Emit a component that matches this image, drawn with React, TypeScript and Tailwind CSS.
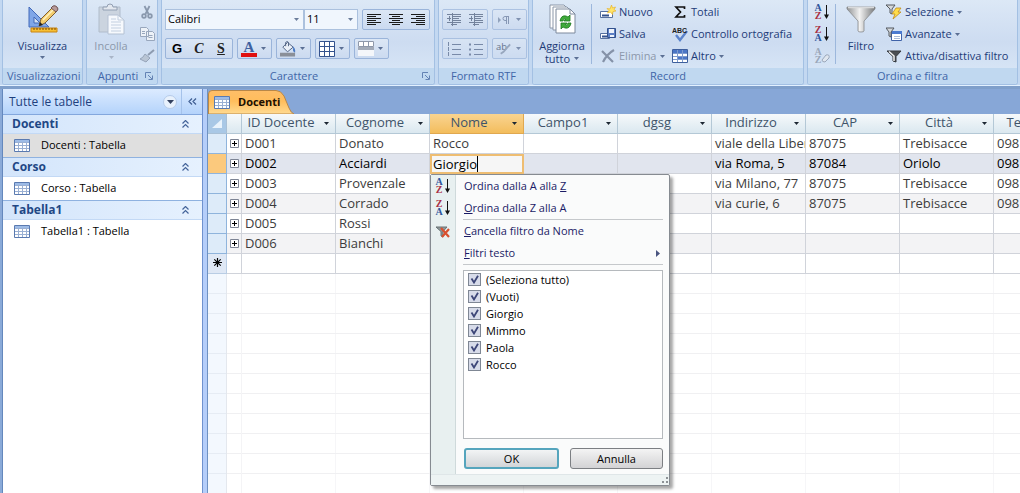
import { useState, type ReactNode } from 'react'

interface Row {
  id: string
  surname: string
  name?: string
  address?: string
  zip?: string
  city?: string
  phone?: string
}

const ROWS: Row[] = [
  { id: 'D001', surname: 'Donato', name: 'Rocco', address: 'viale della Liber', zip: '87075', city: 'Trebisacce', phone: '0981' },
  { id: 'D002', surname: 'Acciardi', name: 'Giorgio', address: 'via Roma, 5', zip: '87084', city: 'Oriolo', phone: '0981' },
  { id: 'D003', surname: 'Provenzale', address: 'via Milano, 77', zip: '87075', city: 'Trebisacce', phone: '0981' },
  { id: 'D004', surname: 'Corrado', address: 'via curie, 6', zip: '87075', city: 'Trebisacce', phone: '0981' },
  { id: 'D005', surname: 'Rossi' },
  { id: 'D006', surname: 'Bianchi' },
]

const COLUMNS = ['ID Docente', 'Cognome', 'Nome', 'Campo1', 'dgsg', 'Indirizzo', 'CAP', 'Città', 'Telefono']
const FILTER_VALUES = ['(Seleziona tutto)', '(Vuoti)', 'Giorgio', 'Mimmo', 'Paola', 'Rocco']
const ACTIVE_ROW = 'D002'

export default function App() {
  return (
    <div className="flex h-screen w-full flex-col overflow-hidden bg-[#87a7d7] font-['Open_Sans',sans-serif] text-[11px] text-[#1e3c78]">
      <Ribbon />
      <div className="flex min-h-0 flex-1">
        <NavPane />
        <main className="flex min-w-0 flex-1 flex-col">
          <DocumentTab />
          <DataSheet />
        </main>
      </div>
    </div>
  )
}

// ── Ribbon ───────────────────────────────────────────────────────────────────

function Ribbon() {
  return (
    <header className="shrink-0 border-b-3 border-[#7f9fca] bg-[#c3d8f1]">
      <div className="flex gap-[3px] border-b border-[#e3f1ff] px-[2px]">
        <Group title="Visualizzazioni" width="w-[81px]">
          <BigButton icon={<DesignIcon />} label="Visualizza" arrow />
        </Group>

        <Group title="Appunti" width="w-[72px]" launcher>
          <div className="flex">
            <BigButton icon={<PasteIcon />} label="Incolla" arrow disabled />
            <div className="flex flex-col">
              <IconButton label="Taglia"><ScissorsIcon /></IconButton>
              <IconButton label="Copia"><CopyIcon /></IconButton>
              <IconButton label="Copia formato"><BrushIcon /></IconButton>
            </div>
          </div>
        </Group>

        <Group title="Carattere" width="w-[274px]" launcher>
          <div className="flex w-full flex-col gap-2 px-[3px] pt-[9px]">
            <div className="flex gap-1">
              <div className="flex">
                <Picker label="Tipo di carattere" value="Calibri" width="w-[139px]" />
                <Picker label="Dimensione carattere" value="11" width="w-[54px]" />
              </div>
              <Cluster>
                <ToolButton label="Allinea a sinistra"><AlignIcon align="left" /></ToolButton>
                <ToolButton label="Centra"><AlignIcon align="center" /></ToolButton>
                <ToolButton label="Allinea a destra"><AlignIcon align="right" /></ToolButton>
              </Cluster>
            </div>
            <div className="flex gap-1">
              <Cluster>
                <ToolButton label="Grassetto"><b className="font-['Liberation_Sans',sans-serif] text-[13px] font-black text-black">G</b></ToolButton>
                <ToolButton label="Corsivo"><i className="font-['Liberation_Serif',serif] text-[14px] font-bold text-[#222]">C</i></ToolButton>
                <ToolButton label="Sottolineato"><b className="font-['Liberation_Serif',serif] text-[14px] text-[#222] underline">S</b></ToolButton>
              </Cluster>
              <Cluster>
                <ToolButton label="Colore carattere" arrow><FontColorIcon /></ToolButton>
              </Cluster>
              <Cluster>
                <ToolButton label="Colore riempimento" arrow><FillIcon /></ToolButton>
              </Cluster>
              <Cluster>
                <ToolButton label="Griglia" arrow><BordersIcon /></ToolButton>
              </Cluster>
              <Cluster>
                <ToolButton label="Colore alternato" arrow><StripesIcon /></ToolButton>
              </Cluster>
            </div>
          </div>
        </Group>

        <Group title="Formato RTF" width="w-[91px]">
          <div className="flex w-full flex-col gap-2 px-[3px] pt-[9px] opacity-70">
            <div className="flex gap-1">
              <Cluster>
                <ToolButton label="Riduci rientro"><IndentIcon /></ToolButton>
                <ToolButton label="Aumenta rientro"><IndentIcon /></ToolButton>
              </Cluster>
              <Cluster>
                <ToolButton label="Direzione testo" arrow><ParagraphIcon /></ToolButton>
              </Cluster>
            </div>
            <div className="flex gap-1">
              <Cluster>
                <ToolButton label="Elenco numerato"><ListIcon /></ToolButton>
                <ToolButton label="Elenco puntato"><ListIcon dots /></ToolButton>
              </Cluster>
              <Cluster>
                <ToolButton label="Evidenziatore" arrow><HighlightIcon /></ToolButton>
              </Cluster>
            </div>
          </div>
        </Group>

        <Group title="Record" width="w-[272px]">
          <div className="flex w-full gap-1 pl-1">
            <BigButton icon={<RefreshIcon />} label="Aggiorna" second="tutto" />
            <div className="my-1 mr-1 w-px bg-[#9cb7dc]" />
            <div className="flex w-[68px] flex-col">
              <SmallButton icon={<NewRecordIcon />} label="Nuovo" />
              <SmallButton icon={<SaveRecordIcon />} label="Salva" />
              <SmallButton icon={<DeleteIcon />} label="Elimina" arrow disabled />
            </div>
            <div className="flex flex-col">
              <SmallButton icon={<SigmaIcon />} label="Totali" />
              <SmallButton icon={<SpellIcon />} label="Controllo ortografia" />
              <SmallButton icon={<MoreIcon />} label="Altro" arrow />
            </div>
          </div>
        </Group>

        <Group title="Ordina e filtra" width="w-[211px]">
          <div className="flex w-full pl-[3px]">
            <div className="flex flex-col">
              <IconButton label="Crescente"><SortIcon top="A" bottom="Z" /></IconButton>
              <IconButton label="Decrescente"><SortIcon top="Z" bottom="A" /></IconButton>
              <IconButton label="Cancella ordinamento"><ClearSortIcon /></IconButton>
            </div>
            <div className="my-1 ml-[2px] w-px bg-[#9cb7dc]" />
            <BigButton icon={<FunnelIcon />} label="Filtro" />
            <div className="flex flex-col">
              <SmallButton icon={<SelectionIcon />} label="Selezione" arrow />
              <SmallButton icon={<AdvancedIcon />} label="Avanzate" arrow />
              <SmallButton icon={<ToggleFilterIcon />} label="Attiva/disattiva filtro" />
            </div>
          </div>
        </Group>
      </div>
    </header>
  )
}

function Group({ title, width, launcher, children }: { title: string; width: string; launcher?: boolean; children: ReactNode }) {
  return (
    <section className={`${width} flex shrink-0 flex-col overflow-hidden rounded-b-[3px] border-x border-b border-[#a3c0e3] bg-linear-to-b from-[#dce8f6] via-[#cddcf1] to-[#dbe9f8]`}>
      <div className="flex h-[68px] justify-center">{children}</div>
      <div className="flex h-[16px] items-center bg-[#c0d8f0] px-1 text-[#4166a8]">
        <h2 className="flex-1 text-center whitespace-nowrap">{title}</h2>
        {launcher && (
          <button aria-label={`Opzioni ${title}`}>
            <svg width="8" height="8" viewBox="0 0 8 8" fill="none" stroke="#6483b4">
              <path d="M.5 6V.5H6M3 3l4 4M7.5 3.500v4h-4" />
            </svg>
          </button>
        )}
      </div>
    </section>
  )
}

function Arrow({ color = 'fill-[#5b6f94]' }: { color?: string }) {
  return (
    <svg width="5" height="3" viewBox="0 0 5 3" className={`shrink-0 ${color}`}>
      <path d="M0 0h5L2.500 3z" />
    </svg>
  )
}

function BigButton({ icon, label, second, arrow, disabled }: { icon: ReactNode; label: string; second?: string; arrow?: boolean; disabled?: boolean }) {
  return (
    <button className={`flex min-w-[50px] flex-col items-center pt-[3px] leading-[13px] ${disabled ? 'text-[#8c98ab]' : ''}`}>
      {icon}
      <span className="pt-1">{label}</span>
      {second && <span className="flex items-center gap-1">{second}<Arrow /></span>}
      {arrow && <span className="pt-1"><Arrow color={disabled ? 'fill-[#a9b5c8]' : undefined} /></span>}
    </button>
  )
}

function SmallButton({ icon, label, arrow, disabled }: { icon: ReactNode; label: string; arrow?: boolean; disabled?: boolean }) {
  return (
    <button className={`flex h-[22px] items-center gap-[3px] pt-[2px] whitespace-nowrap ${disabled ? 'text-[#8c98ab]' : ''}`}>
      {icon}
      <span>{label}</span>
      {arrow && <Arrow />}
    </button>
  )
}

function IconButton({ label, children }: { label: string; children: ReactNode }) {
  return (
    <button aria-label={label} className="flex h-[22px] w-[22px] items-center justify-center pt-[2px]">
      {children}
    </button>
  )
}

function Cluster({ children }: { children: ReactNode }) {
  return <div className="flex h-[21px] rounded-[2px] border border-[#9ab4da] bg-linear-to-b from-[#dce7f5] to-[#cbdaf0]">{children}</div>
}

function ToolButton({ label, arrow, children }: { label: string; arrow?: boolean; children: ReactNode }) {
  return (
    <button aria-label={label} className="flex items-center justify-center gap-1 px-[3px] leading-none">
      <span className="flex w-4 justify-center">{children}</span>
      {arrow && <span className="pr-[2px]"><Arrow /></span>}
    </button>
  )
}

function Picker({ label, value, width }: { label: string; value: string; width: string }) {
  return (
    <div className={`${width} flex h-[21px] items-center border border-[#abc1de] bg-[#f0f6fd] pr-1`}>
      <select aria-label={label} defaultValue={value} className="min-w-0 flex-1 appearance-none bg-transparent pl-[2px] text-black outline-none">
        <option>{value}</option>
      </select>
      <Arrow color="fill-[#6b7d9b]" />
    </div>
  )
}

// ── Navigation pane ──────────────────────────────────────────────────────────

function NavPane() {
  return (
    <aside className="flex w-[208px] shrink-0 border-r border-[#6f92c2]">
      <div className="w-[3px] border-r border-[#6488bd] bg-[#8aaad8]" />
      <div className="flex-1 bg-white">
        <div className="flex h-[26px] items-center border-b border-[#83a7dd] bg-linear-to-b from-[#dcebff] to-[#b4d3fb] pl-[6px]">
          <h2 className="flex-1 text-xs text-[#1e3f7e]">Tutte le tabelle</h2>
          <button aria-label="Categorie" className="mr-1 flex size-[14px] items-center justify-center rounded-full border border-[#b6cbe9] bg-[#e8f1fc]">
            <svg width="7" height="4" viewBox="0 0 7 4"><path d="M0 0h7L3.500 4z" fill="#33415f" /></svg>
          </button>
          <button aria-label="Riduci riquadro" className="flex h-full w-[21px] items-center justify-center border-l border-[#a5c2ea]">
            <svg width="9" height="7" viewBox="0 0 9 7" fill="none" stroke="#3f5e92" strokeWidth="1.200"><path d="M4 .5l-3 3 3 3M8 .5l-3 3 3 3" /></svg>
          </button>
        </div>
        <NavGroup title="Docenti" selected />
        <NavGroup title="Corso" />
        <NavGroup title="Tabella1" last />
      </div>
      <div className="w-[5px] border-l border-[#6f92cf] bg-[#b5cefa]" />
    </aside>
  )
}

function NavGroup({ title, selected, last }: { title: string; selected?: boolean; last?: boolean }) {
  return (
    <section>
      <button className="flex h-[19px] w-full items-center justify-between border-b border-[#c3d9f5] bg-linear-to-r from-[#d3e5fb] to-[#e6f1fe] pr-[13px] pl-[9px] text-xs font-bold text-[#1f4785]">
        {title}
        <svg width="7" height="8" viewBox="0 0 7 8" fill="none" stroke="#44649a" strokeWidth="1.200"><path d="M.5 3.500l3-3 3 3M.5 7.500l3-3 3 3" /></svg>
      </button>
      <a href="#" className={`flex h-6 items-center gap-[11px] pb-px pl-[11px] text-black ${selected ? 'bg-[#dfdfdf]' : ''} ${last ? '' : 'border-b border-[#8fb2e0]'}`}>
        <TableIcon />
        {title} : Tabella
      </a>
    </section>
  )
}

// ── Datasheet ────────────────────────────────────────────────────────────────

function DocumentTab() {
  return (
    <div className="flex h-[25px] shrink-0 items-end">
      <button className="relative flex h-6 w-[86px] items-center gap-2 pl-[6px] font-bold text-[#201000]">
        <svg className="absolute inset-0" width="86" height="24" viewBox="0 0 86 24">
          <defs>
            <linearGradient id="tab" x2="0" y2="1">
              <stop offset="0" stopColor="#ffbe68" />
              <stop offset=".45" stopColor="#ffbd5c" />
              <stop offset="1" stopColor="#ffdb92" />
            </linearGradient>
          </defs>
          <path d="M.5 24V4Q.5.500 4 .5H68Q73 .5 76 6L81 18Q83 23 86 24z" fill="url(#tab)" stroke="#b88748" />
        </svg>
        <span className="relative"><TableIcon /></span>
        <span className="relative">Docenti</span>
      </button>
    </div>
  )
}

function DataSheet() {
  const [name, setName] = useState('Giorgio')

  return (
    <div className="flex min-h-0 flex-1 flex-col overflow-hidden bg-white text-[13px] text-[#3c3c3c]">
      <table className="relative z-10 w-[880px] table-fixed border-separate border-spacing-0 leading-[19px]">
        <colgroup>
          <col className="w-[19px]" />
          <col className="w-[15px]" />
          {COLUMNS.map(c => <col key={c} className="w-[94px]" />)}
        </colgroup>
        <thead>
          <tr className="h-5 bg-linear-to-b from-[#f6f9fb] to-[#d9e7ef]">
            <th className="border-r border-b border-[#a9c0d6] bg-[#a9c8e6] p-0">
              <svg width="18" height="19" viewBox="0 0 18 19"><path d="M14 5v9H4z" fill="#e9f3fc" /></svg>
            </th>
            <th className="border-r border-b border-[#b4c8d6] p-0" />
            {COLUMNS.map(c => (
              <th key={c} className={`border-r border-b p-0 font-normal ${c === 'Nome' ? 'border-[#e0a850] bg-linear-to-b from-[#f9d490] to-[#f3bd5c]' : 'border-[#b4c8d6]'}`}>
                <button className="flex h-[19px] w-full items-center pr-[6px] pl-1 leading-[17px] text-[#40546a]">
                  <span className="flex-1 self-start pr-2 whitespace-nowrap">{c}</span>
                  <Arrow color="fill-[#1c2733]" />
                </button>
              </th>
            ))}
          </tr>
        </thead>
        <tbody>
          {ROWS.map((r, i) => {
            const active = r.id === ACTIVE_ROW
            return (
              <tr key={r.id} className={`h-5 ${active ? 'bg-[#e1e5ee] text-black' : i % 2 ? 'bg-[#f3f3f5]' : 'bg-white'}`}>
                <td className={`border-r border-b border-[#8fb4dc] p-0 ${active ? 'bg-[#fbc97d]' : 'bg-[#ddebf9]'}`} />
                <td className="border-r border-b border-[#d0d3da] p-0">
                  <button aria-label={`Espandi ${r.id}`} className="mx-auto flex">
                    <svg width="9" height="9" viewBox="0 0 9 9" fill="none"><path d="M.5.5h8v8h-8z" fill="#fff" stroke="#7d8494" /><path d="M2 4.500h5M4.500 2v5" stroke="#000" /></svg>
                  </button>
                </td>
                <Cell>{r.id}</Cell>
                <Cell>{r.surname}</Cell>
                {active ? (
                  <td className="relative bg-[#f6f6f6] p-0">
                    <div className="flex h-5 items-center border-2 border-[#eebd72] pl-px">
                      <input aria-label="Nome" value={name} onChange={e => setName(e.target.value)} className="field-sizing-content h-4 bg-transparent text-black outline-none" />
                      <span className="h-4 w-px bg-black" />
                    </div>
                    <FilterMenu />
                  </td>
                ) : (
                  <Cell>{r.name}</Cell>
                )}
                <Cell />
                <Cell />
                <Cell>{r.address}</Cell>
                <Cell>{r.zip}</Cell>
                <Cell>{r.city}</Cell>
                <Cell>{r.phone}</Cell>
              </tr>
            )
          })}
          <tr className="h-5 bg-white">
            <td className="border-r border-b border-[#b9cde4] bg-[#dfe8f5] p-0">
              <svg width="18" height="19" viewBox="0 0 18 19" stroke="#000" strokeWidth="1.200"><path d="M9.500 4v9M5 8.500h9M6.300 5.300l6.400 6.400M12.700 5.300l-6.400 6.400" /></svg>
            </td>
            <td className="border-r border-b border-[#d0d3da] p-0" />
            {COLUMNS.map(c => <Cell key={c} />)}
          </tr>
        </tbody>
      </table>

      {/* Unused area below the new-record row */}
      <div className="flex flex-1">
        <div className="w-[19px] shrink-0 border-r border-[#e4e8ee] bg-[#f3f8fe] bg-[repeating-linear-gradient(to_bottom,transparent_0_19px,#e6ecf4_19px_20px)]" />
        <div className="w-[15px] shrink-0 border-r border-[#f4f4f6] bg-[repeating-linear-gradient(to_bottom,transparent_0_19px,#f0f0f2_19px_20px)]" />
        <div className="flex-1 bg-[repeating-linear-gradient(to_bottom,transparent_0_19px,#f0f0f2_19px_20px),repeating-linear-gradient(to_right,transparent_0_93px,#f6f6f8_93px_94px)]" />
      </div>
    </div>
  )
}

function Cell({ children }: { children?: ReactNode }) {
  return (
    <td className="overflow-hidden border-r border-b border-[#d0d3da] p-0 pl-[3px] whitespace-nowrap">{children}</td>
  )
}

// ── Column filter menu ───────────────────────────────────────────────────────

function FilterMenu() {
  return (
    <div className="absolute top-5 left-0 z-20 flex w-[240px] flex-col rounded-[2px] border border-[#868b91] bg-[#fafbfb] text-[11px] leading-4 text-[#1b1b66] shadow-[3px_3px_3px_rgba(0,0,0,0.35)]">
      <div className="flex">
        <div className="flex w-[25px] shrink-0 flex-col items-center border-r border-[#cfdadb] bg-[#e8f0f0]">
          <span className="flex h-[22px] items-center"><SortIcon top="A" bottom="Z" /></span>
          <span className="flex h-[22px] items-center"><SortIcon top="Z" bottom="A" /></span>
          <span className="mt-[2px] flex h-[22px] items-center"><ClearFilterIcon /></span>
        </div>
        <div className="flex flex-1 flex-col pr-[6px] pl-[7px]">
          <MenuItem>Ordina dalla A alla <u>Z</u></MenuItem>
          <MenuItem><u>O</u>rdina dalla Z alla A</MenuItem>
          <hr className="border-[#c5c8cb]" />
          <MenuItem><u>C</u>ancella filtro da Nome</MenuItem>
          <MenuItem submenu><u>F</u>iltri testo</MenuItem>
          <hr className="mb-[5px] border-[#c5c8cb]" />
          <div className="h-[169px] border border-[#b5b9bd] bg-white pl-1 text-black">
            {FILTER_VALUES.map(v => (
              <label key={v} className="flex h-[17px] items-center gap-[5px]">
                <span className="grid size-[13px] place-items-center *:col-start-1 *:row-start-1">
                  <input type="checkbox" defaultChecked className="peer size-[13px] appearance-none border border-[#7f8794] bg-[#d7dbe9]" />
                  <svg width="9" height="9" viewBox="0 0 9 9" fill="none" className="pointer-events-none invisible peer-checked:visible"><path d="M1.500 3.500L4 7.500 8 .8" stroke="#3d4678" strokeWidth="1.800" /></svg>
                </span>
                {v}
              </label>
            ))}
          </div>
          <div className="flex gap-[11px] pt-[9px] pb-[5px] pl-px">
            <button className="h-[21px] flex-1 rounded-[3px] border-2 border-[#55a5bd] bg-linear-to-b from-[#f2f4f5] to-[#d2d5d8] leading-none text-black">OK</button>
            <button className="h-[21px] flex-1 rounded-[3px] border border-[#7c7f83] bg-linear-to-b from-[#f4f4f4] to-[#d3d3d5] leading-none text-black">Annulla</button>
          </div>
        </div>
      </div>
      <div className="flex h-[11px] items-end justify-end border-t border-[#dfe6e8] bg-[#edf3f3] p-px">
        <svg width="7" height="7" viewBox="0 0 7 7" fill="#8d9296"><path d="M5 0h2v2H5zM5 4h2v2H5zM1 4h2v2H1z" /></svg>
      </div>
    </div>
  )
}

function MenuItem({ submenu, children }: { submenu?: boolean; children: ReactNode }) {
  return (
    <button className="flex h-[22px] items-center justify-between pr-[3px] pl-px text-left">
      <span>{children}</span>
      {submenu && <svg width="4" height="7" viewBox="0 0 4 7"><path d="M0 0l4 3.500L0 7z" fill="#4a5580" /></svg>}
    </button>
  )
}

// ── Icons ────────────────────────────────────────────────────────────────────

function TableIcon() {
  return (
    <svg width="16" height="13" viewBox="0 0 16 13">
      <path d="M.5.5h15v12H.5z" fill="#fff" stroke="#5a7ab0" />
      <path d="M1 1h14v2H1z" fill="#9dbbe6" />
      <path d="M1 3.500h14M1 6.500h14M1 9.500h14M4.500 3v9M8.500 3v9M12.500 3v9" stroke="#9ab0d3" />
    </svg>
  )
}

function DesignIcon() {
  return (
    <svg width="32" height="32" viewBox="0 0 32 32">
      <path d="M2 4v20h20zM7 14l6 6H7z" fill="#7fa6e8" fillRule="evenodd" stroke="#4268b8" />
      <path d="M4 25h26v4H4z" fill="#f7bf33" stroke="#c98413" />
      <path d="M7 25v2M10 25v2M13 25v2M16 25v2M19 25v2M22 25v2M25 25v2M28 25v2" stroke="#7c4a00" />
      <path d="M12 23l2-7L26 4l4 4-12 12z" fill="#f3cc6d" stroke="#806030" />
      <path d="M16 17L27 6" stroke="#fff3c2" strokeWidth="1.500" />
      <path d="M24 5l2-2q2-1 4 1t0 4l-1 1z" fill="#b79a9a" stroke="#6e5252" />
      <path d="M12 23l1-4 3 3z" fill="#222" />
    </svg>
  )
}

function PasteIcon() {
  return (
    <svg width="32" height="32" viewBox="0 0 32 32">
      <path d="M4 4h21v25H4z" fill="#cbd4df" stroke="#b0bccb" />
      <path d="M8 7V4h4q0-3 3-3t3 3h4v3z" fill="#e3e8ef" stroke="#929fb3" />
      <path d="M13 12h10l6 5v14H13z" fill="#f6f9fd" stroke="#b4c1d3" />
      <path d="M23 12v5h6M16 16h5M16 19h10M16 22h10M16 25h10M16 28h10" fill="none" stroke="#c2cfe0" />
    </svg>
  )
}

function ScissorsIcon() {
  return (
    <svg width="14" height="14" viewBox="0 0 14 14" fill="none" stroke="#8998ad" strokeWidth="1.800">
      <path d="M4.500 1l4 8M9.500 1l-4 8" />
      <circle cx="4" cy="11" r="1.800" />
      <circle cx="10" cy="11" r="1.800" />
    </svg>
  )
}

function CopyIcon() {
  return (
    <svg width="15" height="14" viewBox="0 0 15 14" fill="#edf2f8" stroke="#98a7bd">
      <path d="M.5.500h6l2 2v7h-8zM6.500 4.500h6l2 2v7h-8z" />
      <path d="M2 4.500h3M2 6.500h3M8.500 8.500h4M8.500 10.500h4" />
    </svg>
  )
}

function BrushIcon() {
  return (
    <svg width="16" height="14" viewBox="0 0 16 14">
      <path d="M15 1L9 6" stroke="#8d9bb0" strokeWidth="2" />
      <path d="M6 5l5 4-4 4-6-3q3-1 5-5z" fill="#b9c5d4" stroke="#95a3b8" />
    </svg>
  )
}

function AlignIcon({ align }: { align: 'left' | 'center' | 'right' }) {
  const d = {
    left: 'M1 1.500h14M1 3.500h9M1 5.500h14M1 7.500h9M1 9.500h14M1 11.500h9',
    center: 'M1 1.500h14M4 3.500h8M1 5.500h14M4 7.500h8M1 9.500h14M4 11.500h8',
    right: 'M1 1.500h14M6 3.500h9M1 5.500h14M6 7.500h9M1 9.500h14M6 11.500h9',
  }
  return <svg width="16" height="13" viewBox="0 0 16 13" stroke="#1b1b1b"><path d={d[align]} /></svg>
}

function FontColorIcon() {
  return (
    <svg width="16" height="16" viewBox="0 0 16 16">
      <text x="8" y="11" textAnchor="middle" fontSize="15" fontWeight="bold" fontFamily="Liberation Serif, serif" fill="#3f61a0">A</text>
      <path d="M0 12h16v4H0z" fill="#e01010" />
    </svg>
  )
}

function FillIcon() {
  return (
    <svg width="17" height="16" viewBox="0 0 17 16">
      <path d="M3 6l5-5 6 5-6 5z" fill="#eaf0f8" stroke="#4c5f80" />
      <path d="M6 5V1q2-2 3 0v4" fill="none" stroke="#4c5f80" />
      <path d="M13 5q4 2 3 7-3-1-2-5z" fill="#4c7bc4" />
      <path d="M0 12h16v4H0z" fill="#8a8f98" />
    </svg>
  )
}

function BordersIcon() {
  return (
    <svg width="16" height="16" viewBox="0 0 16 16" fill="#fff" stroke="#34538e">
      <path d="M.5.500h15v15H.5zM5.500.500v15M10.500.500v15M.5 5.500h15M.5 10.500h15" />
    </svg>
  )
}

function StripesIcon() {
  return (
    <svg width="16" height="15" viewBox="0 0 16 15">
      <path d="M0 0h16v15H0z" fill="#f4f6fa" />
      <path d="M.5.500h15v5H.5zM5.500.500v5M10.500.500v5" fill="#fff" stroke="#8e98aa" />
      <path d="M0 6h16v3H0z" fill="#a3abb8" />
    </svg>
  )
}

function IndentIcon() {
  return (
    <svg width="16" height="13" viewBox="0 0 16 13" stroke="#4b5b78">
      <path d="M1 1.500h14M7 3.500h8M7 5.500h6M7 7.500h8M1 9.500h14M5 11.500h6M1 5.500h4M3.500 3v5M6.500 0v13" />
    </svg>
  )
}

function ListIcon({ dots }: { dots?: boolean }) {
  return (
    <svg width="16" height="14" viewBox="0 0 16 14" stroke="#546789">
      <path d="M6 2.500h9M6 7.500h9M6 12.500h9" />
      <path d={dots ? 'M1 2.500h2M1 7.500h2M1 12.500h2' : 'M2.500 0v4M2.500 5v4M2.500 10v4'} strokeWidth={dots ? 2 : 1} />
    </svg>
  )
}

function ParagraphIcon() {
  return (
    <svg width="14" height="10" viewBox="0 0 14 10">
      <path d="M1 2l3 3-3 3z" fill="#7587a5" />
      <path d="M12 1.500H8a2 2 0 0 0 0 4h1M9.500 1v8M11.500 1v8" fill="none" stroke="#66789a" />
    </svg>
  )
}

function HighlightIcon() {
  return (
    <svg width="17" height="14" viewBox="0 0 17 14">
      <text x="0" y="8" fontSize="10" fontFamily="Open Sans, sans-serif" fill="#33435e">ab</text>
      <path d="M15 2L8 10l-3 2" fill="none" stroke="#8090a9" strokeWidth="2" />
    </svg>
  )
}

function RefreshIcon() {
  return (
    <svg width="32" height="32" viewBox="0 0 32 32">
      <path d="M4 2h14l3 3v20H4z" fill="#fff" stroke="#8b97a8" />
      <path d="M7 4h14l3 3v20H7z" fill="#fff" stroke="#8b97a8" />
      <path d="M10 6h14l5 5v19H10z" fill="#fff" stroke="#7c899c" />
      <path d="M24 6v5h5" fill="none" stroke="#7c899c" />
      <path d="M14 18q1-6 6-5l2 1 2-2v6h-6l2-2q-2-1-3 2z" fill="#3faa3a" stroke="#1c7a20" strokeWidth=".8" />
      <path d="M25 20q-1 6-6 5l-2-1-2 2v-6h6l-2 2q2 1 3-2z" fill="#3faa3a" stroke="#1c7a20" strokeWidth=".8" />
    </svg>
  )
}

function NewRecordIcon() {
  return (
    <svg width="16" height="14" viewBox="0 0 16 14">
      <path d="M.5 6.500h12v6H.5z" fill="#fff" stroke="#5570a0" />
      <path d="M2 10.500h7" stroke="#34538e" strokeWidth="2" />
      <path d="M11.500 0l1 3 3-1-1.500 2.500 2 1.500-3 .5-.5 3-2-2.500-3 1 1.500-2.500-2-2 3 .5z" fill="#ffe56a" stroke="#e8b52a" strokeWidth=".7" />
    </svg>
  )
}

function SaveRecordIcon() {
  return (
    <svg width="16" height="14" viewBox="0 0 16 14">
      <path d="M.5 6.500h9v5h-9z" fill="#fff" stroke="#5570a0" />
      <path d="M2 9.500h5" stroke="#34538e" strokeWidth="2" />
      <path d="M7.500 1.500h8v9h-8z" fill="#5c7fc4" stroke="#31508c" />
      <path d="M9 2h5v4H9zM10 8h4v2h-4z" fill="#eef3fb" />
    </svg>
  )
}

function DeleteIcon() {
  return (
    <svg width="16" height="14" viewBox="0 0 16 14" stroke="#8592a8" strokeWidth="2.200"><path d="M2 2l11 11M14 1Q7 5 3 13" fill="none" /></svg>
  )
}

function SigmaIcon() {
  return (
    <svg width="16" height="12" viewBox="0 0 16 12" fill="none" stroke="#111" strokeWidth="1.700"><path d="M12.500 3V1H4l4.500 5L4 11h8.500V9" /></svg>
  )
}

function SpellIcon() {
  return (
    <svg width="16" height="16" viewBox="0 0 16 16">
      <path d="M4 9l4 5 7-9" fill="none" stroke="#5b83cc" strokeWidth="2.400" />
      <text x="0" y="7" fontSize="7" fontWeight="bold" fontFamily="Liberation Sans, sans-serif" fill="#222">ABC</text>
    </svg>
  )
}

function MoreIcon() {
  return (
    <svg width="16" height="14" viewBox="0 0 16 14">
      <path d="M.5.500h15v13H.5z" fill="#fff" stroke="#3e5f9d" />
      <path d="M1 1h14v3H1zM6 8h9v3H6z" fill="#4b76c6" />
      <path d="M1 4.500h14M1 7.500h14M1 10.500h14M5.500 1v12M10.500 1v12" stroke="#7e9bce" />
    </svg>
  )
}

function SortIcon({ top, bottom }: { top: 'A' | 'Z'; bottom: 'A' | 'Z' }) {
  const color = { A: '#2f559c', Z: '#a82f45' }
  return (
    <svg width="16" height="18" viewBox="0 0 16 18" fontFamily="Liberation Serif, serif" fontWeight="bold" fontSize="10" textAnchor="middle">
      <text x="4" y="8" fill={color[top]}>{top}</text>
      <text x="4" y="16" fill={color[bottom]}>{bottom}</text>
      <path d="M12.500 2v11" stroke="#111" />
      <path d="M10 11.500h5L12.500 16z" fill="#111" />
    </svg>
  )
}

function ClearSortIcon() {
  return (
    <svg width="16" height="18" viewBox="0 0 16 18" fontFamily="Liberation Serif, serif" fontWeight="bold" fontSize="10" textAnchor="middle" fill="#9aa7ba">
      <text x="4" y="8">A</text>
      <text x="4" y="16">Z</text>
      <path d="M8 13l4-5q4-1 3 3l-4 4q-3 0-3-2z" fill="#dfe6ef" stroke="#9aa7ba" />
    </svg>
  )
}

function FunnelIcon() {
  return (
    <svg width="32" height="32" viewBox="0 0 32 32">
      <defs>
        <linearGradient id="steel">
          <stop offset="0" stopColor="#8f9193" />
          <stop offset=".45" stopColor="#f2f2f2" />
          <stop offset="1" stopColor="#77797b" />
        </linearGradient>
      </defs>
      <path d="M2 4h28v2L19 18v10q0 1-3 1t-3-1V18L2 6z" fill="url(#steel)" stroke="#85888b" strokeWidth=".8" />
      <path d="M3 4.500h26" stroke="#d9dadb" strokeWidth="1.500" />
    </svg>
  )
}

function SelectionIcon() {
  return (
    <svg width="16" height="16" viewBox="0 0 16 16">
      <path d="M0 1h9L6 5v5l-2-1V5z" fill="#d5d8db" stroke="#54595f" />
      <path d="M10 4h5l-3 4h3l-8 7 2-5H6z" fill="#ffdc4a" stroke="#c08c1a" strokeWidth=".8" />
    </svg>
  )
}

function AdvancedIcon() {
  return (
    <svg width="16" height="15" viewBox="0 0 16 15">
      <path d="M5.500 4.500h10v9h-10z" fill="#fff" stroke="#3f62a8" />
      <path d="M6 4h10v3H6z" fill="#4b7ad0" />
      <path d="M8 9.500h6M8 11.500h6" stroke="#aabbd8" />
      <path d="M0 1h8L5 5v5l-2-1V5z" fill="#d5d8db" stroke="#54595f" />
    </svg>
  )
}

function ToggleFilterIcon() {
  return (
    <svg width="16" height="13" viewBox="0 0 16 13">
      <path d="M1 1h14l-5 5.500V12l-3-1V6.500z" fill="#4a4e53" stroke="#35393e" />
      <path d="M3 1.500l5 4.500v5" fill="none" stroke="#f0f1f2" strokeWidth="1.500" />
    </svg>
  )
}

function ClearFilterIcon() {
  return (
    <svg width="16" height="14" viewBox="0 0 16 14">
      <path d="M1 2h11L8 6.500V12l-2-1V6.500z" fill="#8f999b" stroke="#687274" />
      <path d="M6 3l8 9M14 4l-7 8" stroke="#d8502f" strokeWidth="2.200" />
    </svg>
  )
}
